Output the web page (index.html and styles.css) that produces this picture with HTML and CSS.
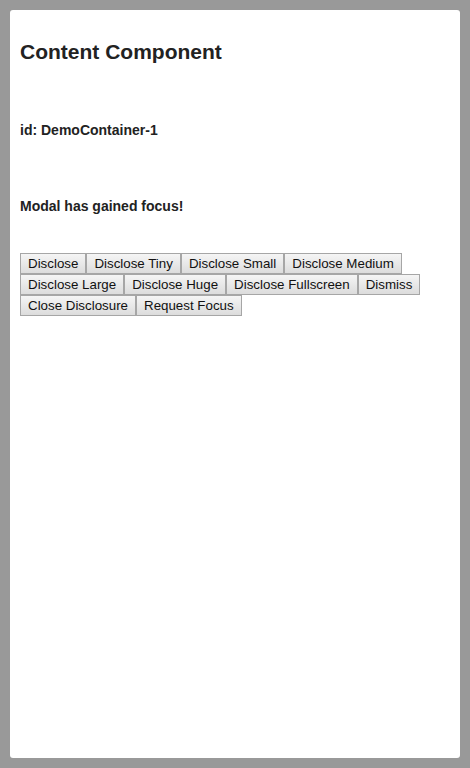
FILE: index.html
```html
<!DOCTYPE html>
<html>
<head>
<meta charset="utf-8">
<link rel="stylesheet" href="styles.css">
</head>
<body>
<div class="panel">
  <h1 class="title">Content Component</h1>
  <p class="info id">id: DemoContainer-1</p>
  <p class="info msg">Modal has gained focus!</p>
  <div class="buttons"><button>Disclose</button><button>Disclose Tiny</button><button>Disclose Small</button><button>Disclose Medium</button><button>Disclose Large</button><button>Disclose Huge</button><button>Disclose Fullscreen</button><button>Dismiss</button><button>Close Disclosure</button><button>Request Focus</button></div>
</div>
</body>
</html>
```
FILE: styles.css
```css
html, body {
  margin: 0;
  padding: 0;
  height: 100%;
}
body {
  background: #999999;
  padding: 10px;
  box-sizing: border-box;
  font-family: "Liberation Sans", Arial, sans-serif;
  color: #222222;
}
.panel {
  background: #ffffff;
  height: 748px;
  border-radius: 3px;
  padding: 0 10px;
  box-sizing: border-box;
  overflow: hidden;
}
.title {
  margin: 0;
  padding-top: 29px;
  font-size: 21px;
  line-height: 26px;
  font-weight: bold;
}
.info {
  margin: 0;
  font-size: 14px;
  line-height: 16px;
  font-weight: bold;
}
.id {
  margin-top: 57px;
}
.msg {
  margin-top: 60px;
}
.buttons {
  margin-top: 39px;
  width: 420px;
  line-height: 0;
}
.buttons button {
  font-family: "Liberation Sans", Arial, sans-serif;
  font-size: 13.333px;
  line-height: 15px;
  height: 21px;
  padding: 0 7px;
  margin: 0;
  border: 1px solid #a6a6a6;
  border-radius: 0;
  background: linear-gradient(#f5f5f5, #dcdcdc);
  color: #111111;
  vertical-align: top;
}
```
